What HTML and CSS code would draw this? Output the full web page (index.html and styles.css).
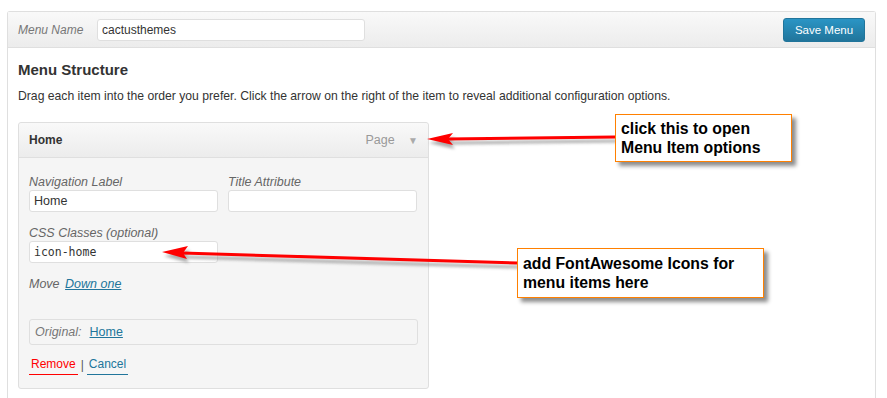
FILE: index.html
```html
<!DOCTYPE html>
<html>
<head>
    <title>Menus</title>
    <link rel="stylesheet" href="styles.css">
</head>
<body>
    <div class="page">
        <div class="menu-frame">
            <div class="menu-header">
                <label class="menu-name-label" for="menuName">Menu Name</label>
                <input type="text" id="menuName" class="menu-name" value="cactusthemes">
                <button class="save-button">Save Menu</button>
            </div>

            <div class="menu-body">
                <h3>Menu Structure</h3>
                <p class="drag-help">Drag each item into the order you prefer. Click the arrow on the right of the item to reveal additional configuration options.</p>

                <div class="menu-item">
                    <div class="item-bar">
                        <span class="item-title">Home</span>
                        <span class="item-type">Page <span class="item-arrow">&#9660;</span></span>
                    </div>
                    <div class="item-settings">
                        <div class="field-row">
                            <div class="field">
                                <label for="navLabel">Navigation Label</label>
                                <input type="text" id="navLabel" value="Home">
                            </div>
                            <div class="field">
                                <label for="titleAttr">Title Attribute</label>
                                <input type="text" id="titleAttr">
                            </div>
                        </div>
                        <div class="field-row">
                            <div class="field">
                                <label for="cssClasses">CSS Classes (optional)</label>
                                <input type="text" id="cssClasses" class="mono" value="icon-home">
                            </div>
                        </div>
                        <p class="move-row"><span class="move-label">Move</span> <a href="#" class="move-link">Down one</a></p>
                        <div class="original-box">
                            <span class="original-label">Original:</span> <a href="#">Home</a>
                        </div>
                        <div class="item-actions">
                            <a href="#" class="remove-link">Remove</a> <span class="sep">|</span> <a href="#" class="cancel-link">Cancel</a>
                        </div>
                    </div>
                </div>
            </div>
        </div>

        <!-- annotations drawn over the screenshot -->
        <svg class="arrows" width="887" height="398" viewBox="0 0 887 398">
            <defs>
                <filter id="soft" x="-10%" y="-50%" width="120%" height="200%">
                    <feGaussianBlur stdDeviation="1.6"/>
                </filter>
            </defs>
            <g fill="#8a8a8a" stroke="#8a8a8a" opacity="0.7" filter="url(#soft)" transform="translate(2,4)">
                <line x1="448" y1="139" x2="615" y2="137" stroke-width="3"/>
                <polygon points="427,139 453,133 448,139 453,145" stroke="none"/>
                <line x1="182" y1="253" x2="517" y2="263" stroke-width="3"/>
                <polygon points="162,252 188,246 183,253 187,259" stroke="none"/>
            </g>
            <g fill="#ff0000" stroke="#ff0000">
                <line x1="448" y1="139" x2="615" y2="137" stroke-width="3"/>
                <polygon points="427,139 453,133 448,139 453,145" stroke="none"/>
                <line x1="182" y1="253" x2="517" y2="263" stroke-width="3"/>
                <polygon points="162,252 188,246 183,253 187,259" stroke="none"/>
            </g>
        </svg>

        <div class="callout callout-open">click this to open<br>Menu Item options</div>
        <div class="callout callout-icons">add FontAwesome Icons for<br>menu items here</div>
    </div>
</body>
</html>
```

FILE: styles.css
```css
body {
    margin: 0;
    background-color: #fff;
    font-family: Arial, "Liberation Sans", sans-serif;
    color: #333;
    overflow: hidden;
}

.page {
    position: relative;
    width: 887px;
    height: 398px;
    padding: 11px 11px 0 7px;
    box-sizing: border-box;
}

/* frame runs off the bottom of the shot, so no bottom border */
.menu-frame {
    border: 1px solid #dfdfdf;
    border-bottom: none;
    border-radius: 3px 3px 0 0;
    height: 387px;
    box-sizing: border-box;
}

.menu-header {
    display: flex;
    align-items: center;
    height: 35px;
    padding: 0 10px;
    background: linear-gradient(#f9f9f9, #ececec);
    border-bottom: 1px solid #dfdfdf;
}

.menu-name-label {
    font-style: italic;
    font-size: 12px;
    color: #777;
    width: 79px;
}

.menu-name {
    width: 268px;
    height: 22px;
    box-sizing: border-box;
    border: 1px solid #dfdfdf;
    border-radius: 3px;
    padding: 0 4px;
    font-family: Arial, "Liberation Sans", sans-serif;
    font-size: 12px;
    color: #333;
}

.save-button {
    margin-left: auto;
    margin-right: 0;
    width: 82px;
    height: 24px;
    border: 1px solid #21759b;
    border-radius: 3px;
    background: linear-gradient(#2a95c5, #21759b);
    color: #fff;
    font-family: Arial, "Liberation Sans", sans-serif;
    font-size: 11.5px;
    padding: 0;
}

.menu-body {
    padding: 13px 10px 0 10px;
}

h3 {
    margin: 0;
    font-size: 15px;
    line-height: 18px;
    color: #333;
}

.drag-help {
    margin: 9px 0 17px 0;
    font-size: 12.2px;
    line-height: 17px;
}

.menu-item {
    width: 411px;
    border: 1px solid #dfdfdf;
    border-radius: 3px;
    box-sizing: border-box;
    background-color: #f5f5f5;
}

.item-bar {
    display: flex;
    align-items: center;
    justify-content: space-between;
    height: 34px;
    padding: 0 10px;
    background: linear-gradient(#f9f9f9, #ececec);
    border-bottom: 1px solid #dfdfdf;
    border-radius: 3px 3px 0 0;
}

.item-title {
    font-weight: bold;
    font-size: 12px;
    color: #333;
}

.item-type {
    font-size: 12.5px;
    color: #999;
    margin-right: 0;
}

.item-arrow {
    font-size: 10px;
    color: #aaa;
    margin-left: 10px;
}

.item-settings {
    padding: 16px 10px 13px 10px;
}

.field-row {
    display: flex;
    gap: 10px;
    margin-bottom: 13px;
}

.field {
    width: 189px;
}

.field label {
    display: block;
    font-style: italic;
    font-size: 12.5px;
    line-height: 16px;
    color: #666;
}

.field input {
    width: 189px;
    height: 22px;
    box-sizing: border-box;
    border: 1px solid #dfdfdf;
    border-radius: 3px;
    background-color: #fff;
    padding: 0 4px;
    font-family: Arial, "Liberation Sans", sans-serif;
    font-size: 12.5px;
    color: #333;
}

.field input.mono {
    font-family: "DejaVu Sans Mono", "Liberation Mono", monospace;
    font-size: 11.5px;
}

a {
    color: #21759b;
}

.move-row {
    margin: 0 0 27px 0;
    font-size: 12.5px;
    line-height: 16px;
}

.move-label {
    font-style: italic;
    color: #666;
}

.move-link {
    font-style: italic;
    margin-left: 2px;
}

.original-box {
    height: 26px;
    box-sizing: border-box;
    border: 1px solid #dfdfdf;
    border-radius: 3px;
    padding: 0 5px;
    display: flex;
    align-items: center;
    gap: 8px;
    font-size: 12.5px;
}

.original-label {
    font-style: italic;
    color: #777;
}

.item-actions {
    margin-top: 11px;
    font-size: 12px;
    line-height: 17px;
    display: flex;
    align-items: center;
    gap: 3px;
}

.item-actions a {
    text-decoration: none;
    padding: 0 2px 1px 2px;
}

.remove-link {
    color: #f00;
    border-bottom: 1px solid #f00;
}

.cancel-link {
    border-bottom: 1px solid #21759b;
}

.sep {
    color: #555;
}

.arrows {
    position: absolute;
    left: 0;
    top: 0;
}

.callout {
    position: absolute;
    background-color: #fff;
    border: 1px solid #ff8000;
    box-shadow: 4px 4px 4px rgba(0, 0, 0, 0.45);
    font-weight: bold;
    font-size: 15.8px;
    line-height: 19px;
    color: #000;
    padding: 4px 5px;
    box-sizing: border-box;
}

.callout-open {
    left: 615px;
    top: 114px;
    width: 177px;
    height: 48px;
}

.callout-icons {
    left: 517px;
    top: 248px;
    width: 247px;
    height: 50px;
    padding-top: 5px;
}
```
